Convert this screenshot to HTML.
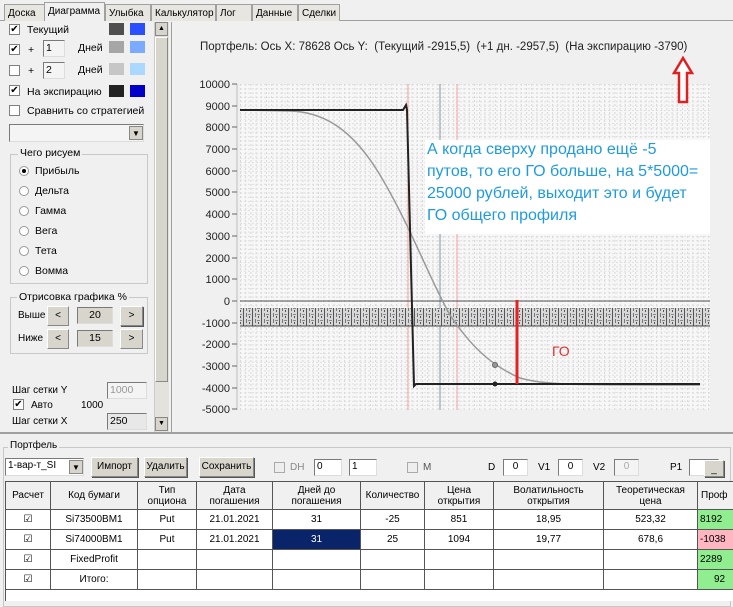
<!DOCTYPE html>
<html><head><meta charset="utf-8"><style>
*{box-sizing:border-box;margin:0;padding:0}
body{width:733px;height:600px;overflow:hidden;background:#f0f0f0;font-family:"Liberation Sans","DejaVu Sans",sans-serif;font-size:10.5px;color:#000;position:relative}
.a{position:absolute;white-space:nowrap}
.tab{position:absolute;top:4px;height:17px;border:1px solid #a0a0a0;border-bottom:none;background:#e8e6e0;font-size:10px;padding:3px 3px 0 3px;white-space:nowrap;overflow:hidden}
.cb{position:absolute;width:11px;height:11px;border:1px solid #808080;background:#fff;font-size:10px;line-height:9px;text-align:center}
.sw{position:absolute;width:15px;height:12px}
.in{position:absolute;height:17px;border:1px solid #7a7a7a;border-right-color:#ddd;border-bottom-color:#ddd;background:#f4f4f4;font-size:10.5px;padding:1px 2px}
.btn{position:absolute;height:20px;border:1px solid #888;border-top-color:#fff;border-left-color:#fff;background:#d8d5cc;font-size:10px;text-align:center;line-height:18px;box-shadow:1px 1px 0 #555}
.rb{position:absolute;width:10px;height:10px;border-radius:50%;border:1px solid #999;background:#fff}
.grp{position:absolute;border:1px solid #c8c8c8}
.gl{position:absolute;background:#f0f0f0;padding:0 2px;font-size:10.5px;white-space:nowrap}
table{border-collapse:collapse;font-size:10px}
td{border:1px solid #555;text-align:center;height:20px;background:#fff}
th{border:1px solid #555;font-weight:normal;background:#f0f0f0;height:28px;line-height:11px;font-size:10px}
</style></head><body>
<div class="a" style="left:0;top:20px;width:733px;height:1px;background:#a0a0a0"></div>
<div class="tab" style="left:4px;width:41px">Доска</div>
<div class="tab" style="left:44px;width:61px;top:2px;height:19px;background:#f0f0f0;z-index:2">Диаграмма</div>
<div class="tab" style="left:105px;width:46px">Улыбка</div>
<div class="tab" style="left:151px;width:65px">Калькулятор</div>
<div class="tab" style="left:216px;width:36px">Лог</div>
<div class="tab" style="left:252px;width:46px">Данные</div>
<div class="tab" style="left:298px;width:42px">Сделки</div>

<div class="cb" style="left:9px;top:24px">✔</div><div class="a" style="left:27px;top:24px">Текущий</div>
<div class="sw" style="left:109px;top:23px;background:#4f4f4f"></div><div class="sw" style="left:130px;top:23px;background:#2a4fff"></div>
<div class="cb" style="left:9px;top:44px">✔</div><div class="a" style="left:28px;top:44px">+</div>
<div class="in" style="left:43px;top:40px;width:22px">1</div><div class="a" style="left:78px;top:42px">Дней</div>
<div class="sw" style="left:109px;top:41px;background:#a6a6a6"></div><div class="sw" style="left:130px;top:41px;background:#7aabff"></div>
<div class="cb" style="left:9px;top:65px"></div><div class="a" style="left:28px;top:65px">+</div>
<div class="in" style="left:43px;top:62px;width:22px">2</div><div class="a" style="left:78px;top:64px">Дней</div>
<div class="sw" style="left:109px;top:63px;background:#c6c6c6"></div><div class="sw" style="left:130px;top:63px;background:#aad8ff"></div>
<div class="cb" style="left:9px;top:85px">✔</div><div class="a" style="left:27px;top:86px">На экспирацию</div>
<div class="sw" style="left:109px;top:85px;background:#222"></div><div class="sw" style="left:130px;top:85px;background:#0000c8"></div>
<div class="cb" style="left:9px;top:105px"></div><div class="a" style="left:27px;top:105px">Сравнить со стратегией</div>
<div class="in" style="left:9px;top:124px;width:135px;height:18px"></div>
<div class="a" style="left:129px;top:126px;width:14px;height:14px;background:#d8d5cc;border:1px solid #888;font-size:8px;text-align:center;line-height:13px">▼</div>
<div class="grp" style="left:10px;top:154px;width:138px;height:130px"></div><div class="gl" style="left:18px;top:147px">Чего рисуем</div>
<div class="rb" style="left:19px;top:166px"><div style="width:4px;height:4px;background:#000;border-radius:50%;margin:2px"></div></div><div class="a" style="left:35px;top:165px">Прибыль</div>
<div class="rb" style="left:19px;top:186px"></div><div class="a" style="left:35px;top:185px">Дельта</div>
<div class="rb" style="left:19px;top:206px"></div><div class="a" style="left:35px;top:205px">Гамма</div>
<div class="rb" style="left:19px;top:226px"></div><div class="a" style="left:35px;top:225px">Вега</div>
<div class="rb" style="left:19px;top:246px"></div><div class="a" style="left:35px;top:245px">Тета</div>
<div class="rb" style="left:19px;top:266px"></div><div class="a" style="left:35px;top:265px">Вомма</div>
<div class="grp" style="left:10px;top:297px;width:138px;height:57px"></div><div class="gl" style="left:17px;top:291px">Отрисовка графика %</div>
<div class="a" style="left:18px;top:310px;font-size:10px">Выше</div>
<div class="btn" style="left:47px;top:306px;width:22px;box-shadow:none">&lt;</div>
<div class="in" style="left:77px;top:307px;width:36px;height:17px;background:#d8d5cc;text-align:center">20</div>
<div class="btn" style="left:120px;top:306px;width:23px">&gt;</div>
<div class="a" style="left:18px;top:333px;font-size:10px">Ниже</div>
<div class="btn" style="left:47px;top:329px;width:22px;box-shadow:none">&lt;</div>
<div class="in" style="left:77px;top:330px;width:36px;height:17px;background:#d8d5cc;text-align:center">15</div>
<div class="btn" style="left:120px;top:329px;width:23px;box-shadow:none">&gt;</div>
<div class="a" style="left:12px;top:385px;font-size:10px">Шаг сетки Y</div>
<div class="in" style="left:107px;top:382px;width:40px;color:#999">1000</div>
<div class="cb" style="left:13px;top:399px">✔</div><div class="a" style="left:31px;top:400px;font-size:10px">Авто</div><div class="a" style="left:81px;top:400px;font-size:10px">1000</div>
<div class="a" style="left:12px;top:416px;font-size:10px">Шаг сетки X</div>
<div class="in" style="left:107px;top:413px;width:40px;background:#e8e8e8">250</div>
<div class="a" style="left:154px;top:22px;width:15px;height:410px;background:#e4e2dc;border-left:1px solid #ccc"></div>
<div class="a" style="left:155px;top:37px;width:13px;height:345px;background:#d8d5cc;border:1px solid #888;border-top-color:#fff;border-left-color:#fff"></div>
<div class="a" style="left:155px;top:22px;width:13px;height:14px;background:#d8d5cc;border:1px solid #888;font-size:7px;text-align:center;line-height:12px">▲</div>
<div class="a" style="left:155px;top:417px;width:13px;height:14px;background:#d8d5cc;border:1px solid #888;font-size:7px;text-align:center;line-height:12px">▼</div>
<div class="a" style="left:171px;top:22px;width:1px;height:411px;background:#a0a0a0"></div>
<div class="a" style="left:0;top:432px;width:733px;height:2px;background:#a0a0a0"></div>

<div class="a" style="left:200px;top:41px;font-size:11.5px;color:#222;white-space:nowrap">Портфель: Ось X: 78628 Ось Y:&nbsp;&nbsp;(Текущий -2915,5)&nbsp;&nbsp;(+1 дн. -2957,5)&nbsp;&nbsp;(На экспирацию -3790)</div>
<svg class="a" style="left:172px;top:22px" width="561" height="410" viewBox="172 22 561 410">
<defs>
<pattern id="gv" x="240" y="0" width="5.2" height="4" patternUnits="userSpaceOnUse"><line x1="0.5" y1="0" x2="0.5" y2="2" stroke="#d6d6d6" stroke-width="1"/></pattern>
<pattern id="gh" x="0" y="84" width="4" height="4.34" patternUnits="userSpaceOnUse"><line x1="0" y1="0.5" x2="2" y2="0.5" stroke="#dedede"/></pattern>
<pattern id="bd" width="9" height="6" patternUnits="userSpaceOnUse"><rect width="9" height="6" fill="#d8d8d8"/><rect width="1" height="6" fill="#555"/><rect x="3" y="1" width="1" height="4" fill="#777"/><rect x="5" y="2" width="3" height="1" fill="#8a8a8a"/><rect x="6" y="4" width="1" height="2" fill="#556"/></pattern>
</defs>
<rect x="240" y="84" width="470" height="326" fill="#f7f7f7"/>
<rect x="240" y="84" width="470" height="326" fill="url(#gv)"/>
<rect x="240" y="84" width="470" height="326" fill="url(#gh)"/>
<g stroke="#666" stroke-width="1">
<line x1="237" y1="84" x2="237" y2="410" stroke="#bbb"/>
<line x1="232" y1="84" x2="237" y2="84"/><line x1="232" y1="106" x2="237" y2="106"/><line x1="232" y1="127" x2="237" y2="127"/><line x1="232" y1="149" x2="237" y2="149"/><line x1="232" y1="171" x2="237" y2="171"/><line x1="232" y1="192" x2="237" y2="192"/><line x1="232" y1="214" x2="237" y2="214"/><line x1="232" y1="236" x2="237" y2="236"/><line x1="232" y1="258" x2="237" y2="258"/><line x1="232" y1="279" x2="237" y2="279"/><line x1="232" y1="301" x2="237" y2="301"/><line x1="232" y1="323" x2="237" y2="323"/><line x1="232" y1="344" x2="237" y2="344"/><line x1="232" y1="366" x2="237" y2="366"/><line x1="232" y1="388" x2="237" y2="388"/><line x1="232" y1="409" x2="237" y2="409"/>
</g>
<g font-size="11" fill="#222" text-anchor="end" font-family="Liberation Sans">
<text x="230" y="88">10000</text><text x="230" y="110">9000</text><text x="230" y="131">8000</text><text x="230" y="153">7000</text><text x="230" y="175">6000</text><text x="230" y="196">5000</text><text x="230" y="218">4000</text><text x="230" y="240">3000</text><text x="230" y="262">2000</text><text x="230" y="283">1000</text><text x="230" y="305">0</text><text x="230" y="327">-1000</text><text x="230" y="348">-2000</text><text x="230" y="370">-3000</text><text x="230" y="392">-4000</text><text x="230" y="413">-5000</text>
</g>
<line x1="408" y1="84" x2="408" y2="410" stroke="#f4a0a0"/>
<line x1="457" y1="84" x2="457" y2="410" stroke="#f4a0a0"/>
<line x1="440" y1="84" x2="440" y2="410" stroke="#8894a0"/>
<line x1="240" y1="301" x2="710" y2="301" stroke="#555"/>
<rect x="240" y="302" width="470" height="3" fill="url(#gv)"/>
<rect x="240" y="308" width="470" height="18" fill="url(#bd)"/>
<line x1="240" y1="326" x2="710" y2="326" stroke="#444"/>
<path d="M240,110 L290,111 C320,112 350,125 380,175 C410,225 430,280 450,315 C470,345 490,365 520,378 C545,385 570,385 700,385" fill="none" stroke="#999" stroke-width="1.5"/>
<path d="M240,110 L403,110 L406,105 L407,110 L414,386 L416,384 L700,384" fill="none" stroke="#222" stroke-width="2"/>
<circle cx="495" cy="365" r="2.5" fill="#999" stroke="#666"/>
<circle cx="495" cy="384" r="2.5" fill="#222"/>
<line x1="517" y1="300" x2="517" y2="384" stroke="#e82020" stroke-width="3"/>
<text x="552" y="356" font-size="14" fill="#e03030" font-family="Liberation Sans">ГО</text>
<rect x="425" y="140" width="285" height="94" fill="#fff"/>
<g font-size="16" fill="#1e9be0" font-family="Liberation Sans"><text x="427" y="154">А когда сверху продано ещё -5</text><text x="427" y="176">путов, то его ГО больше, на 5*5000=</text><text x="427" y="198">25000 рублей, выходит это и будет</text><text x="427" y="220">ГО общего профиля</text></g>
<path d="M683,58 L692,73 L687,73 L687,102 L679,102 L679,73 L674,73 Z" fill="#fff" stroke="#e02020" stroke-width="2.5"/>
</svg>

<div class="grp" style="left:3px;top:447px;width:728px;height:160px"></div><div class="gl" style="left:8px;top:440px;font-size:10px">Портфель</div>
<div class="in" style="left:5px;top:458px;width:79px;height:18px;background:#fff;font-size:10px">1-вар-т_SI</div>
<div class="a" style="left:69px;top:460px;width:14px;height:14px;background:#d8d5cc;border:1px solid #888;font-size:8px;text-align:center;line-height:13px">▼</div>
<div class="btn" style="left:91px;top:457px;width:47px">Импорт</div>
<div class="btn" style="left:144px;top:457px;width:43px">Удалить</div>
<div class="btn" style="left:199px;top:457px;width:55px">Сохранить</div>
<div class="cb" style="left:274px;top:462px;border-color:#aaa;background:#eee"></div><div class="a" style="left:290px;top:462px;color:#888;font-size:10px">DH</div>
<div class="in" style="left:314px;top:459px;width:28px;background:#fff;font-size:10px">0</div>
<div class="in" style="left:349px;top:459px;width:28px;background:#fff;font-size:10px">1</div>
<div class="cb" style="left:407px;top:462px;border-color:#aaa;background:#eee"></div><div class="a" style="left:423px;top:462px;color:#555;font-size:10px">M</div>
<div class="a" style="left:488px;top:462px;font-size:10px">D</div><div class="in" style="left:503px;top:459px;width:25px;background:#fff;text-align:center;font-size:10px">0</div>
<div class="a" style="left:538px;top:462px;font-size:10px">V1</div><div class="in" style="left:558px;top:459px;width:25px;background:#fff;text-align:center;font-size:10px">0</div>
<div class="a" style="left:593px;top:462px;font-size:10px">V2</div><div class="in" style="left:614px;top:459px;width:25px;text-align:center;color:#aaa;font-size:10px">0</div>
<div class="a" style="left:670px;top:462px;font-size:10px">P1</div><div class="in" style="left:689px;top:459px;width:30px;background:#fff"></div>
<div class="btn" style="left:704px;top:460px;width:20px;height:17px">_</div>
<div class="a" style="left:5px;top:481px;width:728px;height:120px;background:#fff;border-left:1px solid #555;border-top:1px solid #555"></div>
<table class="a" style="left:5px;top:481px;table-layout:fixed;width:740px">
<colgroup><col style="width:45px"><col style="width:87px"><col style="width:59px"><col style="width:76px"><col style="width:88px"><col style="width:64px"><col style="width:69px"><col style="width:110px"><col style="width:94px"><col style="width:48px"></colgroup>
<tr><th>Расчет</th><th>Код бумаги</th><th>Тип<br>опциона</th><th>Дата<br>погашения</th><th>Дней до<br>погашения</th><th>Количество</th><th>Цена<br>открытия</th><th>Волатильность<br>открытия</th><th>Теоретическая<br>цена</th><th style="text-align:left;padding-left:3px">Проф</th></tr>
<tr><td>☑</td><td>Si73500BM1</td><td>Put</td><td>21.01.2021</td><td>31</td><td>-25</td><td>851</td><td>18,95</td><td>523,32</td><td style="background:#90ee90;text-align:left;padding-left:2px">8192</td></tr>
<tr><td>☑</td><td>Si74000BM1</td><td>Put</td><td>21.01.2021</td><td style="background:#0a246a;color:#fff">31</td><td>25</td><td>1094</td><td>19,77</td><td>678,6</td><td style="background:#ffb6c1;text-align:left;padding-left:2px">-1038</td></tr>
<tr><td>☑</td><td>FixedProfit</td><td></td><td></td><td></td><td></td><td></td><td></td><td></td><td style="background:#90ee90;text-align:left;padding-left:2px">2289</td></tr>
<tr><td>☑</td><td>Итого:</td><td></td><td></td><td></td><td></td><td></td><td></td><td></td><td style="background:#90ee90;text-align:left;padding-left:16px">92</td></tr>
</table>
</body></html>
